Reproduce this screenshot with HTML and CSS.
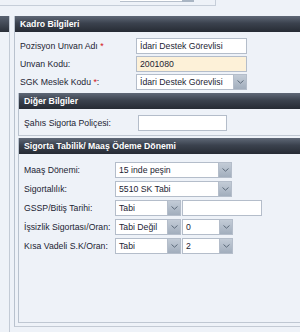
FILE: index.html
```html
<!DOCTYPE html>
<html lang="tr">
<head>
    <meta charset="UTF-8">
    <title>Kadro Bilgileri</title>
    <link rel="stylesheet" href="styles.css">
</head>
<body>
    <div class="topbar">
        <div class="topbox">
            <span class="topinput"></span><span class="toptrig"></span>
        </div>
    </div>

    <div class="layout">
        <div class="sidepanel">
            <div class="sidehead"></div>
        </div>

        <div class="mainpanel">
            <div class="head">Kadro Bilgileri</div>
            <div class="body">
                <div class="row">
                    <label class="lbl">Pozisyon Unvan Adı <span class="req">*</span></label>
                    <div class="field w110">İdari Destek Görevlisi</div>
                </div>
                <div class="row">
                    <label class="lbl">Unvan Kodu:</label>
                    <div class="field w110 yellow">2001080</div>
                </div>
                <div class="row">
                    <label class="lbl">SGK Meslek Kodu <span class="req">*</span>:</label>
                    <div class="combo w110"><span class="val">İdari Destek Görevlisi</span><span class="trig"><svg width="7" height="4" viewBox="0 0 7 4"><path d="M0.5 0.5 L3.5 3.2 L6.5 0.5" fill="none" stroke="#5d6a7a" stroke-width="1"/></svg></span></div>
                </div>

                <div class="subpanel diger">
                    <div class="head">Diğer Bilgiler</div>
                    <div class="subbody">
                        <div class="row">
                            <label class="lbl l114">Şahıs Sigorta Poliçesi:</label>
                            <div class="field w90"></div>
                        </div>
                    </div>
                </div>

                <div class="subpanel sigorta">
                    <div class="head">Sigorta Tabilik/ Maaş Ödeme Dönemi</div>
                    <div class="subbody tight">
                        <div class="row">
                            <label class="lbl l91">Maaş Dönemi:</label>
                            <div class="combo w117"><span class="val">15 inde peşin</span><span class="trig"><svg width="7" height="4" viewBox="0 0 7 4"><path d="M0.5 0.5 L3.5 3.2 L6.5 0.5" fill="none" stroke="#5d6a7a" stroke-width="1"/></svg></span></div>
                        </div>
                        <div class="row">
                            <label class="lbl l91">Sigortalılık:</label>
                            <div class="combo w117"><span class="val">5510 SK Tabi</span><span class="trig"><svg width="7" height="4" viewBox="0 0 7 4"><path d="M0.5 0.5 L3.5 3.2 L6.5 0.5" fill="none" stroke="#5d6a7a" stroke-width="1"/></svg></span></div>
                        </div>
                        <div class="row">
                            <label class="lbl l91">GSSP/Bitiş Tarihi:</label>
                            <div class="combo w65"><span class="val">Tabi</span><span class="trig"><svg width="7" height="4" viewBox="0 0 7 4"><path d="M0.5 0.5 L3.5 3.2 L6.5 0.5" fill="none" stroke="#5d6a7a" stroke-width="1"/></svg></span></div>
                            <div class="field w80"></div>
                        </div>
                        <div class="row">
                            <label class="lbl l91">İşsizlik Sigortası/Oran:</label>
                            <div class="combo w65"><span class="val">Tabi Değil</span><span class="trig"><svg width="7" height="4" viewBox="0 0 7 4"><path d="M0.5 0.5 L3.5 3.2 L6.5 0.5" fill="none" stroke="#5d6a7a" stroke-width="1"/></svg></span></div>
                            <div class="combo w50"><span class="val">0</span><span class="trig"><svg width="7" height="4" viewBox="0 0 7 4"><path d="M0.5 0.5 L3.5 3.2 L6.5 0.5" fill="none" stroke="#5d6a7a" stroke-width="1"/></svg></span></div>
                        </div>
                        <div class="row">
                            <label class="lbl l91">Kısa Vadeli S.K/Oran:</label>
                            <div class="combo w65"><span class="val">Tabi</span><span class="trig"><svg width="7" height="4" viewBox="0 0 7 4"><path d="M0.5 0.5 L3.5 3.2 L6.5 0.5" fill="none" stroke="#5d6a7a" stroke-width="1"/></svg></span></div>
                            <div class="combo w50"><span class="val">2</span><span class="trig"><svg width="7" height="4" viewBox="0 0 7 4"><path d="M0.5 0.5 L3.5 3.2 L6.5 0.5" fill="none" stroke="#5d6a7a" stroke-width="1"/></svg></span></div>
                        </div>
                    </div>
                </div>
            </div>
        </div>
    </div>
</body>
</html>
```

FILE: styles.css
```css
body {
    margin: 0;
    width: 300px;
    height: 332px;
    overflow: hidden;
    background-color: #eef2f8;
    font-family: "Liberation Sans", Arial, sans-serif;
    font-size: 8.7px;
    color: #1c2433;
}

.topbar {
    height: 16px;
}

.topbox {
    width: 215px;
    height: 5px;
    border-bottom: 1px solid #c6ced9;
    border-right: 1px solid #c6ced9;
    display: flex;
    align-items: flex-start;
}

.topinput {
    margin-left: 120px;
    width: 62px;
    height: 1px;
    background-color: #ffffff;
    border-bottom: 1px solid #b7c0cc;
}

.toptrig {
    width: 12px;
    height: 2px;
    background-color: #a9b5c3;
}

.layout {
    display: flex;
    align-items: flex-start;
}

.sidepanel {
    width: 9px;
    height: 316px;
    border-right: 1px solid #c3cbd6;
    flex-shrink: 0;
}

.sidehead {
    height: 16px;
    background: linear-gradient(#596271, #2a3039);
}

.mainpanel {
    margin-left: 4px;
    flex: 1;
    min-width: 0;
    height: 311px;
    box-sizing: border-box;
    border-left: 1px solid #b9c2ce;
    border-bottom: 1px solid #c3cad4;
    display: flex;
    flex-direction: column;
    overflow: hidden;
}

.head {
    height: 16px;
    line-height: 16px;
    padding-left: 5px;
    font-weight: bold;
    color: #ffffff;
    background: linear-gradient(#5f6877 0%, #3b424e 45%, #262b34 100%);
    flex-shrink: 0;
}

.body {
    flex: 1;
    display: flex;
    flex-direction: column;
    padding: 6px 0 3px 3px;
    gap: 2px;
}

.row {
    display: flex;
    align-items: center;
    height: 16px;
    flex-shrink: 0;
}

.body > .row .lbl {
    padding-left: 2px;
    width: 116px;
}

.lbl {
    flex-shrink: 0;
    white-space: nowrap;
}

.req {
    color: #d4121b;
}

.field,
.combo {
    height: 16px;
    box-sizing: border-box;
    border: 1px solid #b4bdca;
    background-color: #ffffff;
    line-height: 14px;
    white-space: nowrap;
    overflow: hidden;
    flex-shrink: 0;
}

.field {
    padding-left: 3px;
}

.yellow {
    background-color: #fdf1d8;
}

.combo {
    display: flex;
}

.combo .val {
    flex: 1;
    padding-left: 3px;
    overflow: hidden;
}

.trig {
    width: 12px;
    flex-shrink: 0;
    background: linear-gradient(#c3ccd7, #a2aebd);
    border-left: 1px solid #b4bdca;
    display: flex;
    align-items: center;
    justify-content: center;
}

.w110 { width: 111px; }
.w117 { width: 117px; }
.w90 { width: 89px; }
.w80 { width: 80px; }
.w65 { width: 66px; }
.w50 { width: 51px; }

.combo + .field,
.combo + .combo {
    margin-left: 1px;
}

.subpanel {
    border-left: 1px solid #b9c2ce;
    border-bottom: 1px solid #bfc7d2;
    flex-shrink: 0;
    display: flex;
    flex-direction: column;
}

.diger {
    margin-top: 1px;
}

.sigorta {
    margin-top: 0;
    flex: 1;
}

.subbody {
    padding: 6px 0 4px 5px;
    display: flex;
    flex-direction: column;
    gap: 3px;
}

.subbody.tight {
    padding-top: 8px;
}

.l114 { width: 114px; }
.l91 { width: 91px; }
```
